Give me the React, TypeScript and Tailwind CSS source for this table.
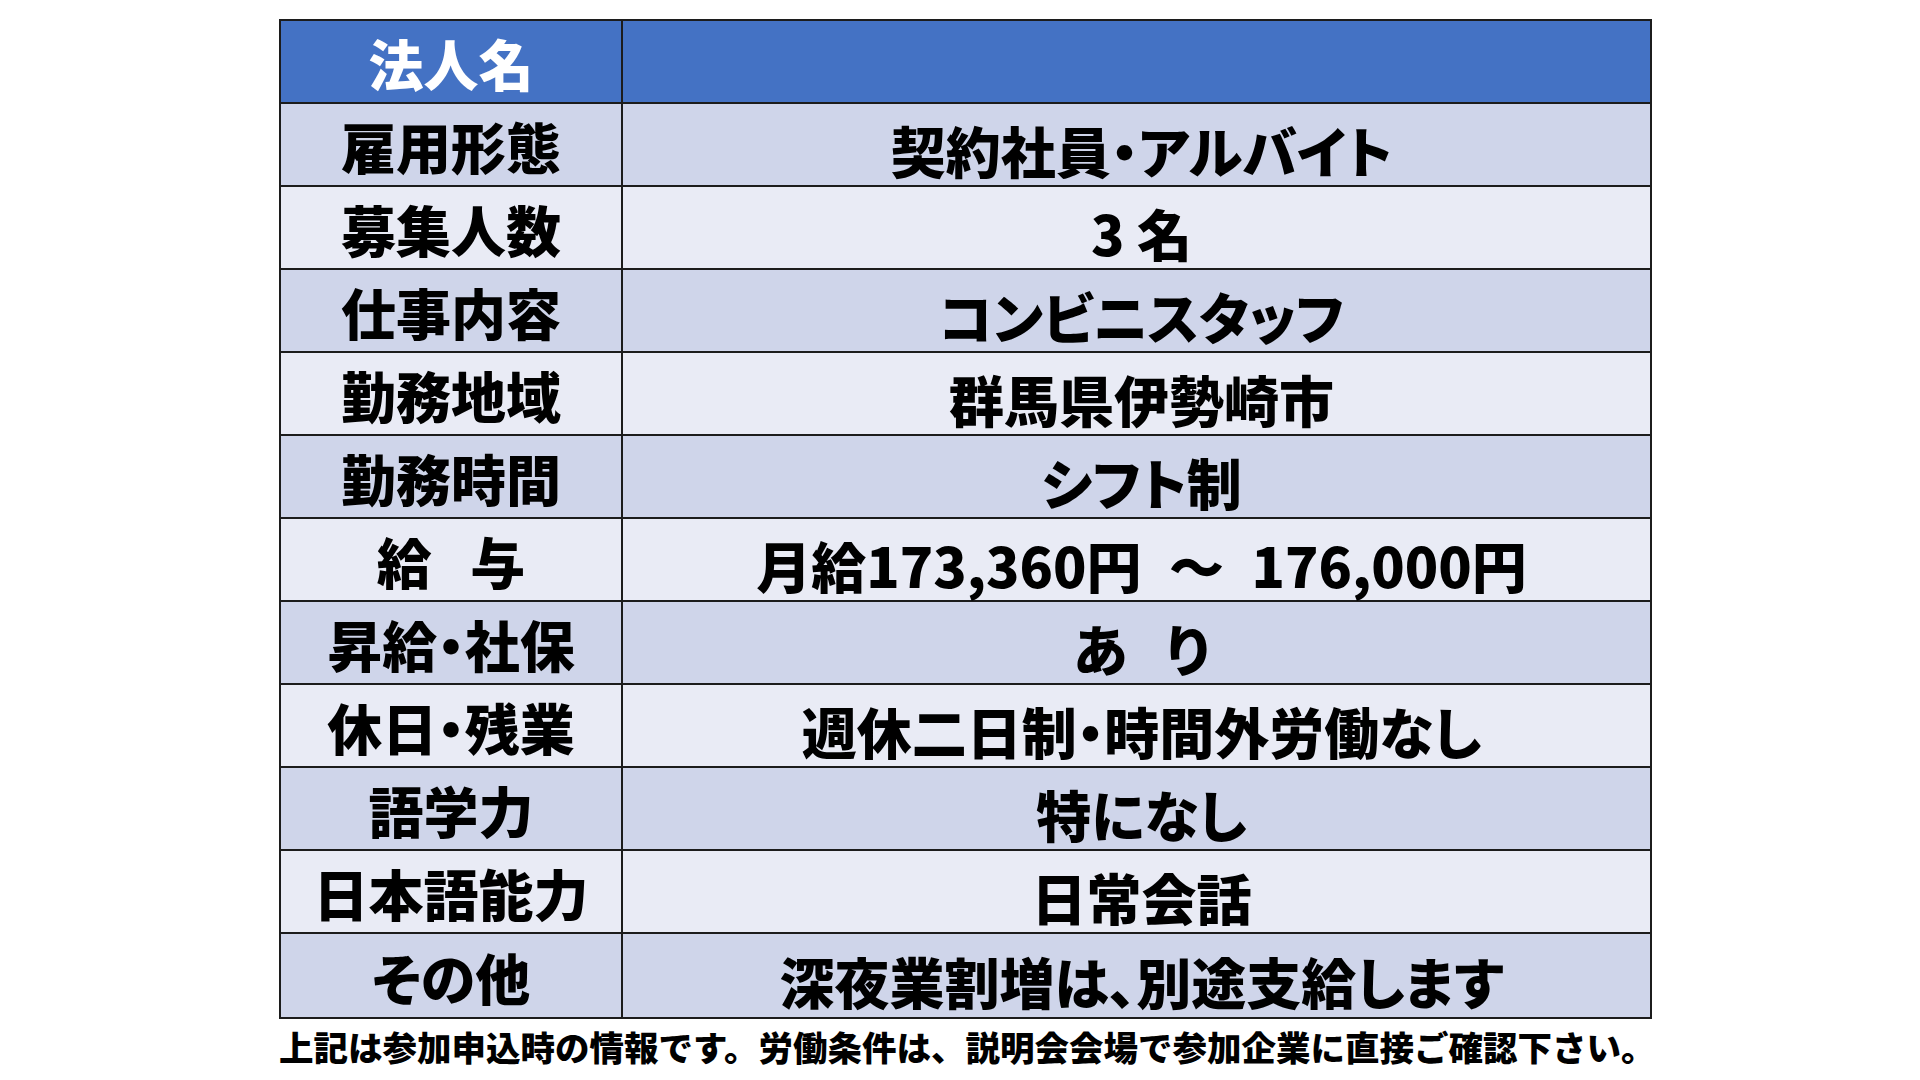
const ROWS: { label: string; value: string }[] = [
  { label: "雇用形態", value: "契約社員・アルバイト" },
  { label: "募集人数", value: "3 名" },
  { label: "仕事内容", value: "コンビニスタッフ" },
  { label: "勤務地域", value: "群馬県伊勢崎市" },
  { label: "勤務時間", value: "シフト制" },
  { label: "給\u2002\u2009与", value: "月給173,360円\u2002～\u2002176,000円" },
  { label: "昇給・社保", value: "あ\u2002\u2009り" },
  { label: "休日・残業", value: "週休二日制・時間外労働なし" },
  { label: "語学力", value: "特になし" },
  { label: "日本語能力", value: "日常会話" },
  { label: "その他", value: "深夜業割増は、別途支給します" },
];

const FONT = "font-['Noto_Sans_CJK_JP','Noto_Sans_CJK_SC',sans-serif]";

export default function App() {
  return (
    <div className={`min-h-[1080px] w-[1920px] bg-white pl-[279px] pt-[19px] ${FONT}`}>
      {/* job table */}
      <div className="w-[1373px] border-2 border-[#1c1c1c] [font-feature-settings:'palt']">
        <div className="grid h-[83px] grid-cols-[342px_1fr] border-b-2 border-[#1c1c1c] bg-[#4472c4]">
          <div className="flex items-center justify-center border-r-2 border-[#1c1c1c] pt-[2px] text-[55px] leading-none font-black text-white">
            法人名
          </div>
          <div />
        </div>
        {ROWS.map((r, i) => (
          <div
            key={r.label}
            className={`grid h-[83px] grid-cols-[342px_1fr] ${
              i < ROWS.length - 1 ? "border-b-2 border-[#1c1c1c]" : "h-[81px]"
            } ${i % 2 === 0 ? "bg-[#cfd5ea]" : "bg-[#e9ebf5]"}`}
          >
            <div className="flex items-center justify-center whitespace-pre border-r-2 border-[#1c1c1c] pt-[2px] text-[55px] leading-none font-black text-black">
              {r.label}
            </div>
            <div className="flex items-center justify-center whitespace-pre pl-[10px] pt-[10px] text-[55px] leading-none font-black text-black">
              {r.value}
            </div>
          </div>
        ))}
      </div>

      <p className="mt-[10px] text-[34.5px] leading-none font-black text-black">
        上記は参加申込時の情報です。労働条件は、説明会会場で参加企業に直接ご確認下さい。
      </p>
    </div>
  );
}
